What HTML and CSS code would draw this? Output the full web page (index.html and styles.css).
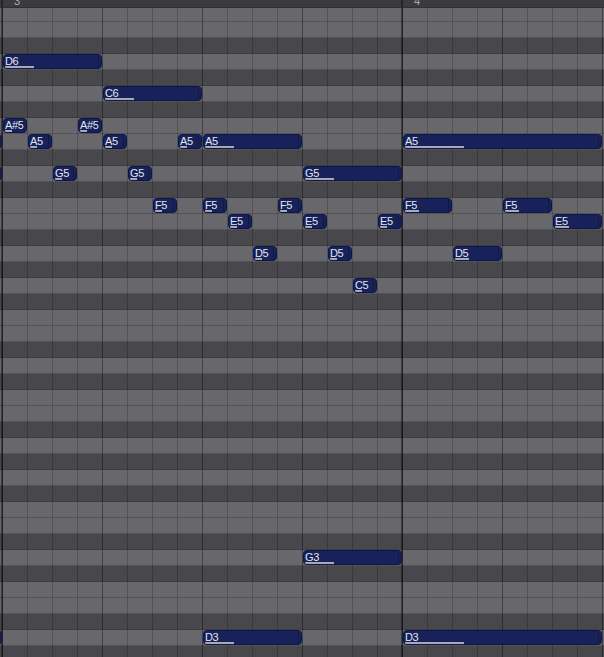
FILE: index.html
```html
<!DOCTYPE html>
<html>
<head>
<meta charset="utf-8">
<link rel="stylesheet" href="styles.css">
</head>
<body>
<div class="roll">
  <div class="ruler">
    <span class="mark" style="left:14px">3</span>
    <span class="mark" style="left:414px">4</span>
  </div>
  <div class="canvas">
    <div class="rows">
      <div class="r"></div><div class="r"></div><div class="r d"></div><div class="r"></div><div class="r d"></div><div class="r"></div>
      <div class="r d"></div><div class="r"></div><div class="r"></div><div class="r d"></div><div class="r"></div><div class="r d"></div>
      <div class="r"></div><div class="r"></div><div class="r d"></div><div class="r"></div><div class="r d"></div><div class="r"></div>
      <div class="r d"></div><div class="r"></div><div class="r"></div><div class="r d"></div><div class="r"></div><div class="r d"></div>
      <div class="r"></div><div class="r"></div><div class="r d"></div><div class="r"></div><div class="r d"></div><div class="r"></div>
      <div class="r d"></div><div class="r"></div><div class="r"></div><div class="r d"></div><div class="r"></div><div class="r d"></div>
      <div class="r"></div><div class="r"></div><div class="r d"></div><div class="r"></div><div class="r d"></div>
    </div>
    <div class="vlines"></div>

    <div class="note" style="left:3px;top:48px;width:99px"><span>D6</span><i></i></div>
    <div class="note" style="left:103px;top:80px;width:99px"><span>C6</span><i></i></div>

    <div class="note" style="left:3px;top:112px;width:24px"><span>A#5</span><i></i></div>
    <div class="note" style="left:78px;top:112px;width:24px"><span>A#5</span><i></i></div>

    <div class="note" style="left:-22px;top:128px;width:24px"></div>
    <div class="note" style="left:28px;top:128px;width:24px"><span>A5</span><i></i></div>
    <div class="note" style="left:103px;top:128px;width:24px"><span>A5</span><i></i></div>
    <div class="note" style="left:178px;top:128px;width:24px"><span>A5</span><i></i></div>
    <div class="note" style="left:203px;top:128px;width:99px"><span>A5</span><i></i></div>
    <div class="note" style="left:403px;top:128px;width:199px"><span>A5</span><i></i></div>

    <div class="note" style="left:-22px;top:160px;width:24px"></div>
    <div class="note" style="left:53px;top:160px;width:24px"><span>G5</span><i></i></div>
    <div class="note" style="left:128px;top:160px;width:24px"><span>G5</span><i></i></div>
    <div class="note" style="left:303px;top:160px;width:99px"><span>G5</span><i></i></div>

    <div class="note" style="left:153px;top:192px;width:24px"><span>F5</span><i></i></div>
    <div class="note" style="left:203px;top:192px;width:24px"><span>F5</span><i></i></div>
    <div class="note" style="left:278px;top:192px;width:24px"><span>F5</span><i></i></div>
    <div class="note" style="left:403px;top:192px;width:49px"><span>F5</span><i></i></div>
    <div class="note" style="left:503px;top:192px;width:49px"><span>F5</span><i></i></div>

    <div class="note" style="left:228px;top:208px;width:24px"><span>E5</span><i></i></div>
    <div class="note" style="left:303px;top:208px;width:24px"><span>E5</span><i></i></div>
    <div class="note" style="left:378px;top:208px;width:24px"><span>E5</span><i></i></div>
    <div class="note" style="left:553px;top:208px;width:49px"><span>E5</span><i></i></div>

    <div class="note" style="left:253px;top:240px;width:24px"><span>D5</span><i></i></div>
    <div class="note" style="left:328px;top:240px;width:24px"><span>D5</span><i></i></div>
    <div class="note" style="left:453px;top:240px;width:49px"><span>D5</span><i></i></div>

    <div class="note" style="left:353px;top:272px;width:24px"><span>C5</span><i></i></div>

    <div class="note" style="left:303px;top:544px;width:99px"><span>G3</span><i></i></div>

    <div class="note" style="left:-22px;top:624px;width:24px"></div>
    <div class="note" style="left:203px;top:624px;width:99px"><span>D3</span><i></i></div>
    <div class="note" style="left:403px;top:624px;width:199px"><span>D3</span><i></i></div>
  </div>
</div>
</body>
</html>
```

FILE: styles.css
```css
html, body {
  margin: 0;
  padding: 0;
  overflow: hidden;
  background: #46464b;
}

.roll {
  width: 604px;
  height: 657px;
  overflow: hidden;
  font-family: "Liberation Sans", Arial, sans-serif;
}

.ruler {
  position: relative;
  z-index: 3;
  height: 7px;
  border-bottom: 1px solid #2f2f33;
  background-color: #3a3a3f;
  background-image: repeating-linear-gradient(90deg, transparent 0 1px, rgba(0,0,0,0.35) 1px 3px, transparent 3px 400px);
  overflow: hidden;
}

.mark {
  position: absolute;
  top: -4px;
  font-size: 11px;
  line-height: 11px;
  color: #a9a9b0;
}

.canvas {
  position: relative;
  margin-top: -2px;
}

.rows {
  display: flex;
  flex-direction: column;
}

.r {
  height: 15px;
  border-bottom: 1px solid #535358;
  background: #68676c;
}

.r.d {
  background: #47474c;
  border-bottom-color: #3d3d42;
}

.vlines {
  position: absolute;
  inset: 0;
  background-image:
    repeating-linear-gradient(90deg, transparent 0 1px, rgba(0,0,0,0.42) 1px 3px, transparent 3px 400px),
    repeating-linear-gradient(90deg, transparent 0 2px, rgba(0,0,0,0.22) 2px 3px, transparent 3px 100px),
    repeating-linear-gradient(90deg, transparent 0 2px, rgba(0,0,0,0.2) 2px 3px, transparent 3px 25px);
}

.note {
  position: absolute;
  box-sizing: border-box;
  height: 15px;
  background: #17225a;
  border: 1px solid #0e1643;
  border-radius: 4px;
  overflow: hidden;
}

.note::after {
  content: "";
  position: absolute;
  right: 2px;
  top: 1px;
  bottom: 1px;
  width: 1px;
  background: rgba(0, 0, 0, 0.22);
}

.note span {
  display: block;
  padding-left: 1px;
  padding-top: 1px;
  font-size: 11px;
  line-height: 11px;
  letter-spacing: -0.4px;
  color: #e4e5ee;
  white-space: nowrap;
}

.note i {
  position: absolute;
  left: 1px;
  top: 11px;
  height: 2px;
  width: 30%;
  background: #a9a9b8;
}
```
